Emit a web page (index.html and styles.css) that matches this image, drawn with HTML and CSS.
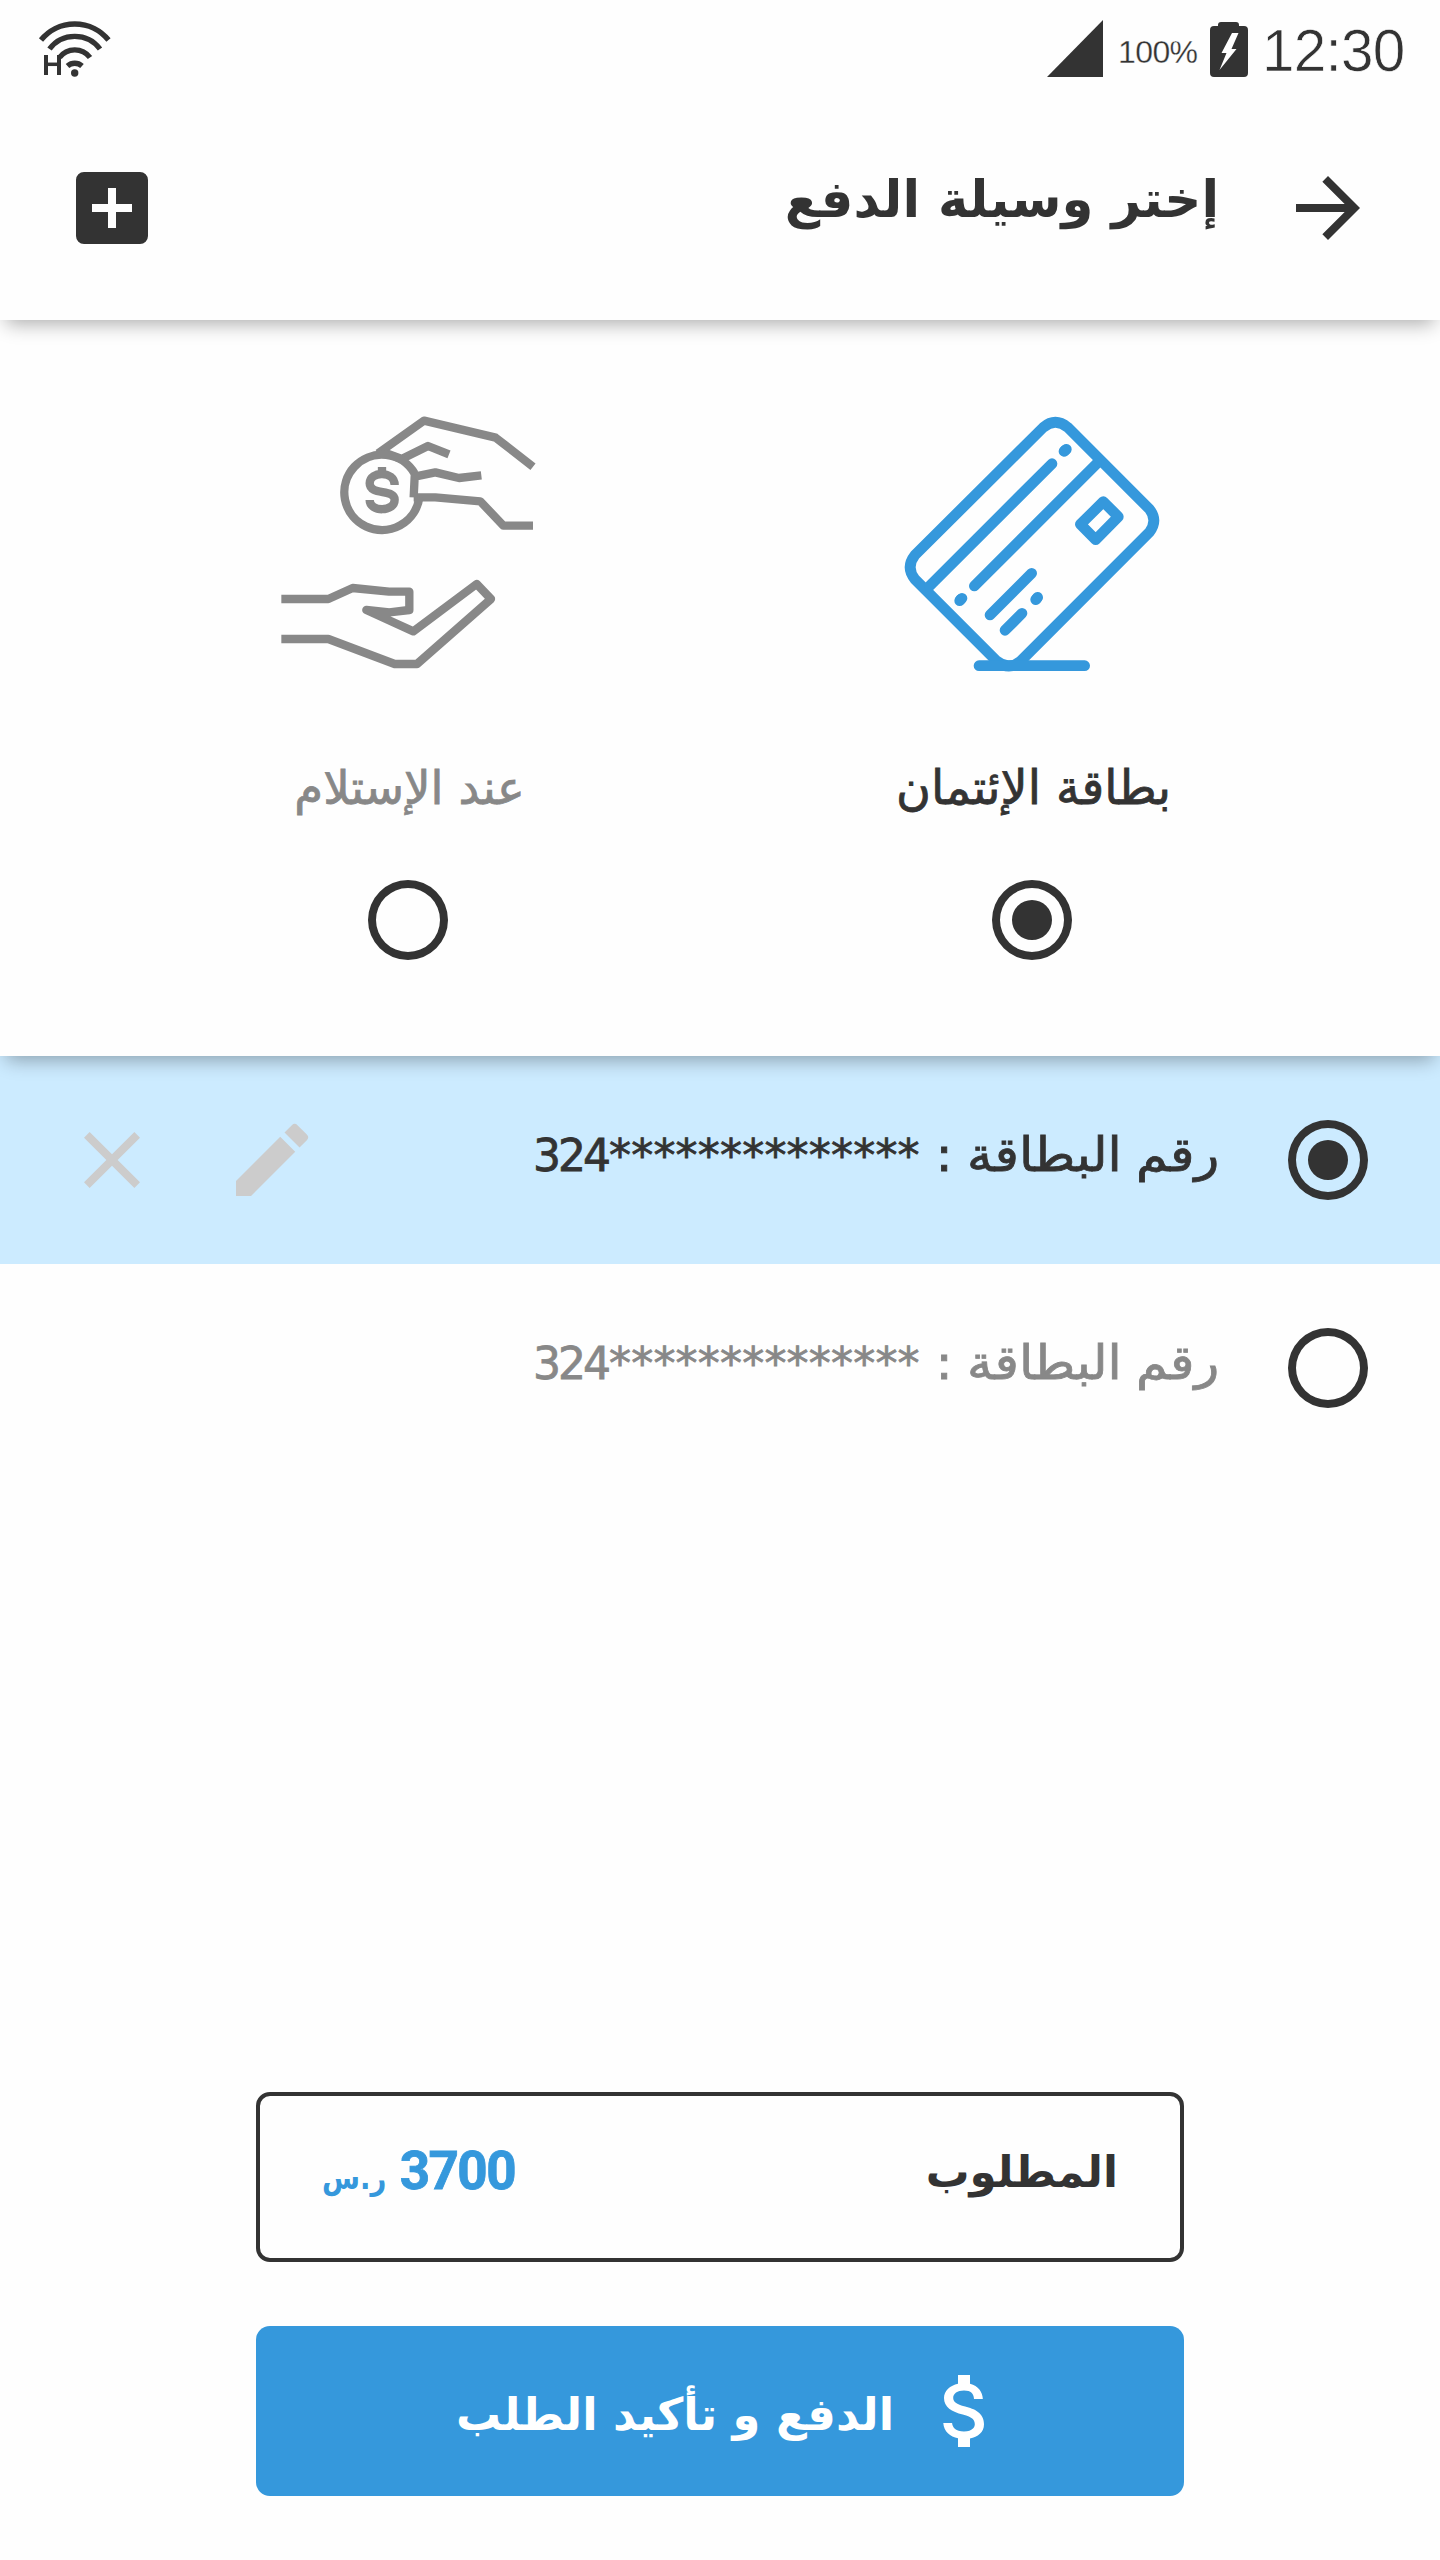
FILE: index.html
```html
<!DOCTYPE html>
<html lang="ar" dir="rtl">
<head>
<meta charset="utf-8">
<title>إختر وسيلة الدفع</title>
<link rel="stylesheet" href="styles.css">
</head>
<body>
<main class="screen">
  <header class="header">
    <div class="status" dir="ltr">
      <svg class="wifi" width="74" height="60" viewBox="38 18 74 60">
        <g fill="none" stroke="#333" stroke-width="5.4">
          <path d="M41 40A43.5 43.5 0 0 1 108.500 40"/>
          <path d="M49.500 49A31.500 31.500 0 0 1 100 49"/>
          <path d="M59.500 57.500A19 19 0 0 1 90 57.500"/>
          <path d="M67.500 66A11 11 0 0 1 82 66"/>
          <path d="M46 55V75M59 55V75" stroke-width="4"/>
          <path d="M46 64.300H59" stroke-width="3.500"/>
        </g>
        <circle cx="74.700" cy="73" r="3.700" fill="#333"/>
      </svg>
      <div class="status-info">
        <svg width="56" height="57" viewBox="0 0 56 57"><path d="M56 0V57H0z" fill="#333"/></svg>
        <span class="percent">100%</span>
        <svg class="battery" width="38" height="55" viewBox="0 0 38 55">
          <path d="M8 4V3a3 3 0 0 1 3-3H26a3 3 0 0 1 3 3V4h5a4 4 0 0 1 4 4V51a4 4 0 0 1-4 4H4a4 4 0 0 1-4-4V8a4 4 0 0 1 4-4z" fill="#333"/>
          <path d="M22 11h6.500L21.500 27H26.500L9.500 48l7-17h-5z" fill="#fff"/>
        </svg>
        <span class="clock">12:30</span>
      </div>
    </div>
    <div class="toolbar">
      <svg class="icon" viewBox="0 0 24 24"><path d="M12 4l-1.410 1.410L16.170 11H4v2h12.170l-5.580 5.590L12 20l8-8z"/></svg>
      <h1 class="title">إختر وسيلة الدفع</h1>
      <svg class="icon" viewBox="0 0 24 24"><path d="M19 3H5a2 2 0 0 0-2 2v14a2 2 0 0 0 2 2h14a2 2 0 0 0 2-2V5a2 2 0 0 0-2-2zm-2 10h-4v4h-2v-4H7v-2h4V7h2v4h4z"/></svg>
    </div>
  </header>

  <section class="methods">
    <div class="method">
      <svg class="art-card" width="300" height="300" viewBox="0 0 900 900">
        <g fill="none" stroke="#3598dc" stroke-width="32" stroke-linecap="round">
          <path d="M490 112Q526 82 563 112L808 357Q835 391 808 427L422 813Q387 843 350 813L105 568Q76 532 105 495Z"/>
          <path d="M148 589L516 221M283 588L650 221M554 182L556 180M241 629L243 627M330 675L455 550M375 721L426 670M469 627L471 625M297 827H614"/>
          <path d="M670 335L715 380L647 449L601 403Z" stroke-linejoin="round"/>
          <path d="M552 184L559 178M239 632L246 625M467 629L473 622"/>
        </g>
      </svg>
      <span class="method-name">بطاقة الإئتمان</span>
      <svg class="icon" viewBox="0 0 24 24"><path d="M12 7a5 5 0 1 0 0 10 5 5 0 0 0 0-10zm0-5a10 10 0 1 0 0 20 10 10 0 0 0 0-20zm0 18a8 8 0 1 1 0-16 8 8 0 0 1 0 16z"/></svg>
    </div>
    <div class="method muted">
      <svg class="art-cash" width="300" height="300" viewBox="0 0 900 900">
        <g fill="none" stroke="#888" stroke-width="25" stroke-linejoin="round">
          <path d="M354 190L492 92L707 143L819 230"/>
          <path d="M380 190L425 207L504 168L567 193"/>
          <path d="M461 322H526L661 334L730 407H819"/>
          <path d="M461 322L464 260L526 247L597 264L664 256"/>
          <path d="M478 322A113 113 0 1 1 464 251"/>
          <path d="M404 285C404 242 329 242 329 280C329 318 404 295 404 329C404 367 329 367 329 330M366 231V250"/>
          <path d="M64 627H205L278 594L387 605H448V660L388 667L319 660L460 724L650 582L693 627L471 822H404L205 747H64"/>
        </g>
      </svg>
      <span class="method-name">عند الإستلام</span>
      <svg class="icon" viewBox="0 0 24 24"><path d="M12 2a10 10 0 1 0 0 20 10 10 0 0 0 0-20zm0 18a8 8 0 1 1 0-16 8 8 0 0 1 0 16z"/></svg>
    </div>
  </section>

  <section class="cards">
    <div class="card-row selected">
      <svg class="icon" viewBox="0 0 24 24"><path d="M12 7a5 5 0 1 0 0 10 5 5 0 0 0 0-10zm0-5a10 10 0 1 0 0 20 10 10 0 0 0 0-20zm0 18a8 8 0 1 1 0-16 8 8 0 0 1 0 16z"/></svg>
      <span class="card-text"><span class="card-label">رقم البطاقة :</span><span class="card-number" dir="ltr"><span class="digits">324</span><span class="mask">**************</span></span></span>
      <svg class="icon light" viewBox="0 0 24 24"><path d="M3 17.250V21h3.750L17.810 9.940l-3.750-3.750zM20.710 7.040a1 1 0 0 0 0-1.410l-2.340-2.340a1 1 0 0 0-1.410 0l-1.830 1.830 3.750 3.750z"/></svg>
      <svg class="icon light delete" viewBox="0 0 24 24"><path d="M19 6.410L17.590 5 12 10.590 6.410 5 5 6.410 10.590 12 5 17.590 6.410 19 12 13.410 17.590 19 19 17.590 13.410 12z"/></svg>
    </div>
    <div class="card-row muted">
      <svg class="icon" viewBox="0 0 24 24"><path d="M12 2a10 10 0 1 0 0 20 10 10 0 0 0 0-20zm0 18a8 8 0 1 1 0-16 8 8 0 0 1 0 16z"/></svg>
      <span class="card-text"><span class="card-label">رقم البطاقة :</span><span class="card-number" dir="ltr"><span class="digits">324</span><span class="mask">**************</span></span></span>
    </div>
  </section>

  <footer class="footer">
    <div class="total">
      <span class="total-label">المطلوب</span>
      <span class="amount"><span class="sum">3700</span><span class="currency">ر.س</span></span>
    </div>
    <button class="pay">
      <svg class="icon" viewBox="0 0 24 24"><path d="M11.800 10.900c-2.270-.59-3-1.200-3-2.150 0-1.090 1.010-1.850 2.700-1.850 1.780 0 2.440.85 2.500 2.100h2.210c-.07-1.720-1.120-3.300-3.210-3.810V3h-3v2.160c-1.940.42-3.500 1.680-3.500 3.610 0 2.310 1.910 3.460 4.700 4.130 2.500.6 3 1.480 3 2.410 0 .69-.49 1.790-2.700 1.790-2.060 0-2.870-.92-2.980-2.100h-2.200c.12 2.190 1.760 3.420 3.680 3.830V21h3v-2.150c1.950-.37 3.500-1.500 3.500-3.550 0-2.840-2.430-3.810-4.700-4.400z"/></svg>
      <span class="pay-label">الدفع و تأكيد الطلب</span>
    </button>
  </footer>
</main>
</body>
</html>
```
FILE: styles.css
```css
* { box-sizing: border-box; }
body {
  margin: 0;
  background: #fefefe;
  color: #333;
  font-family: "DejaVu Sans", sans-serif;
}
svg { display: block; flex: none; }
.screen {
  width: 1440px;
  height: 2560px;
  display: flex;
  flex-direction: column;
  overflow: hidden;
}
.icon { width: 96px; height: 96px; fill: #333; }
.light { fill: #ccc; }

.header, .methods {
  background: #fefefe;
  box-shadow: 0 10px 18px -6px rgba(0, 0, 0, .32);
}
.header { height: 320px; z-index: 2; flex: none; }
.status {
  height: 96px;
  padding: 18px 34px 0 38px;
  display: flex;
  justify-content: space-between;
  font-family: "Liberation Sans", sans-serif;
}
.status-info { display: flex; padding-top: 2px; }
.percent {
  width: 78px;
  margin: 0 14px 0 15px;
  font-size: 32px;
  line-height: 64px;
  letter-spacing: -.6px;
  -webkit-text-stroke: .3px #fefefe;
}
.battery { margin-top: 2px; }
.clock {
  width: 144px;
  margin-left: 14px;
  font-size: 58.500px;
  line-height: 61px;
  letter-spacing: -.8px;
  -webkit-text-stroke: .7px #fefefe;
}
.toolbar { display: flex; align-items: center; padding: 64px 64px 0; }
.title {
  flex: 1;
  margin: 0;
  padding: 0 61px 18px 0;
  font-size: 51.4px;
  line-height: 78px;
}

.methods {
  height: 736px;
  flex: none;
  z-index: 1;
  display: flex;
  justify-content: space-between;
  padding: 70px 258px 0;
}
.method { width: 300px; display: flex; flex-direction: column; align-items: center; }
.art-card { margin-right: 4px; }
.art-cash { margin-left: 4px; }
.method-name {
  height: 96px;
  margin: 50px 0 36px 3px;
  font-size: 47.6px;
  line-height: 96px;
  white-space: nowrap;
  -webkit-text-stroke: .8px currentColor;
}
.method.muted .method-name { font-size: 46.600px; }
.muted { color: #888; }

.cards { flex: 1; }
.card-row { height: 208px; display: flex; align-items: center; padding: 0 64px; }
.selected { background: #ccebff; }
.card-text {
  flex: none;
  width: 686px;
  margin: 0 61px 0 213px;
  padding-bottom: 11px;
  display: flex;
  justify-content: space-between;
  align-items: baseline;
  font-size: 44px;
  line-height: 85px;
  white-space: nowrap;
  -webkit-text-stroke: .8px currentColor;
}
.card-label { font-size: 47px; transform: scaleX(1.09); transform-origin: right; word-spacing: -2px; }
.card-number { display: flex; width: 390px; }
.digits { letter-spacing: -3px; margin-right: 1px; }
.mask { letter-spacing: .2px; }
.delete { margin-right: 64px; }

.footer { padding: 0 256px 64px; }
.total {
  height: 170px;
  border: 4px solid #333;
  border-radius: 14px;
  padding: 0 62px 12px;
  display: flex;
  justify-content: space-between;
  align-items: center;
  font-weight: bold;
}
.total-label { font-size: 43.700px; }
.amount { display: flex; align-items: baseline; gap: 3px; color: #3598dc; }
.sum { font-size: 53px; font-family: Roboto, sans-serif; letter-spacing: -1.600px; -webkit-text-stroke: .8px currentColor; }
.currency { font-size: 32px; transform: scaleX(.86); transform-origin: left; }
.pay {
  width: 100%;
  height: 170px;
  margin-top: 64px;
  padding: 0 170px 0 0;
  border: 0;
  border-radius: 14px;
  background: #3598dc;
  color: #fff;
  display: flex;
  align-items: center;
  font: bold 44.800px/90px "DejaVu Sans", sans-serif;
}
.pay .icon { fill: #fff; }
.pay-label { margin-right: 24px; padding-top: 7px; }
```
